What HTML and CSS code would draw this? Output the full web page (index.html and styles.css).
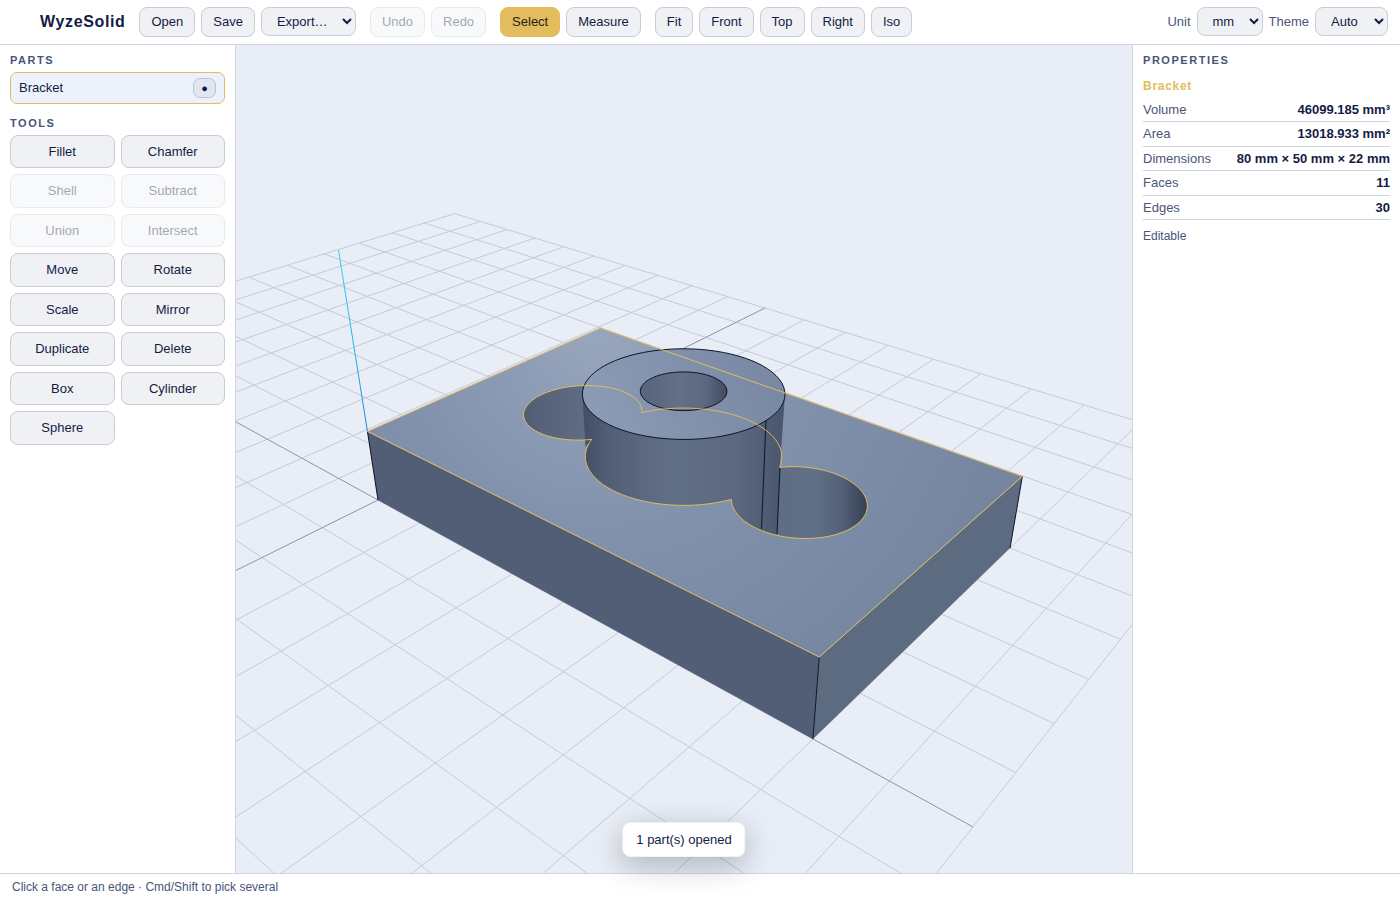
FILE: index.html
```html
<!DOCTYPE html>
<html lang="en">
<head>
<meta charset="utf-8">
<title>WyzeSolid</title>
<link rel="stylesheet" href="styles.css">
</head>
<body class="app">
<header class="topbar">
  <h1 class="brand">WyzeSolid</h1>
  <div class="group">
    <button class="btn" type="button">Open</button>
    <button class="btn" type="button">Save</button>
    <select class="select" aria-label="Export"><option>Export…</option></select>
  </div>
  <div class="group">
    <button class="btn" type="button" disabled>Undo</button>
    <button class="btn" type="button" disabled>Redo</button>
  </div>
  <div class="group">
    <button class="btn btn-active" type="button">Select</button>
    <button class="btn" type="button">Measure</button>
  </div>
  <div class="group">
    <button class="btn" type="button">Fit</button>
    <button class="btn" type="button">Front</button>
    <button class="btn" type="button">Top</button>
    <button class="btn" type="button">Right</button>
    <button class="btn" type="button">Iso</button>
  </div>
  <div class="group settings">
    <label for="unit">Unit</label>
    <select class="select" id="unit"><option>mm</option></select>
    <label for="theme">Theme</label>
    <select class="select select-theme" id="theme"><option>Auto</option></select>
  </div>
</header>

<main class="workspace">
  <aside class="panel panel-left">
    <h2 class="heading">Parts</h2>
    <div class="part">
      <span>Bracket</span>
      <button class="visibility" type="button" aria-label="Toggle visibility">●</button>
    </div>
    <h2 class="heading">Tools</h2>
    <div class="tools">
      <button class="btn tool" type="button">Fillet</button>
      <button class="btn tool" type="button">Chamfer</button>
      <button class="btn tool" type="button" disabled>Shell</button>
      <button class="btn tool" type="button" disabled>Subtract</button>
      <button class="btn tool" type="button" disabled>Union</button>
      <button class="btn tool" type="button" disabled>Intersect</button>
      <button class="btn tool" type="button">Move</button>
      <button class="btn tool" type="button">Rotate</button>
      <button class="btn tool" type="button">Scale</button>
      <button class="btn tool" type="button">Mirror</button>
      <button class="btn tool" type="button">Duplicate</button>
      <button class="btn tool" type="button">Delete</button>
      <button class="btn tool" type="button">Box</button>
      <button class="btn tool" type="button">Cylinder</button>
      <button class="btn tool" type="button">Sphere</button>
    </div>
  </aside>

  <section class="viewport" aria-label="3D view">
    <svg class="scene" viewBox="236 45 896 828" preserveAspectRatio="xMidYMid slice" aria-hidden="true">
      <defs>
        <radialGradient id="topShade" gradientUnits="userSpaceOnUse" cx="600" cy="330" r="430">
          <stop offset="0" stop-color="#98a6bd"/><stop offset=".45" stop-color="#8292ad"/><stop offset="1" stop-color="#7585a0"/>
        </radialGradient>
        <linearGradient id="bossShade" gradientUnits="userSpaceOnUse" x1="583" y1="0" x2="786" y2="0">
          <stop offset="0" stop-color="#434e63"/><stop offset=".12" stop-color="#525e75"/><stop offset=".45" stop-color="#627087"/><stop offset=".75" stop-color="#5b687f"/><stop offset="1" stop-color="#48556b"/>
        </linearGradient>
        <linearGradient id="bossTop" gradientUnits="userSpaceOnUse" x1="600" y1="430" x2="770" y2="350">
          <stop offset="0" stop-color="#8b9bb6"/><stop offset="1" stop-color="#7888a3"/>
        </linearGradient>
        <linearGradient id="leftPocket" gradientUnits="userSpaceOnUse" x1="523" y1="0" x2="600" y2="0">
          <stop offset="0" stop-color="#515d74"/><stop offset="1" stop-color="#637188"/>
        </linearGradient>
        <linearGradient id="rightPocket" gradientUnits="userSpaceOnUse" x1="732" y1="0" x2="868" y2="0">
          <stop offset="0" stop-color="#5b687f"/><stop offset=".6" stop-color="#617088"/><stop offset=".8" stop-color="#546178"/><stop offset="1" stop-color="#353f51"/>
        </linearGradient>
        <linearGradient id="hole" gradientUnits="userSpaceOnUse" x1="640" y1="0" x2="728" y2="0">
          <stop offset="0" stop-color="#56637a"/><stop offset=".45" stop-color="#637188"/><stop offset=".75" stop-color="#5b687f"/><stop offset="1" stop-color="#3f4a5f"/>
        </linearGradient>
        <linearGradient id="zAxis" gradientUnits="userSpaceOnUse" x1="339" y1="250" x2="378" y2="500">
          <stop offset="0" stop-color="#2bd8ec"/><stop offset=".35" stop-color="#2bb4f0"/><stop offset=".72" stop-color="#2380e6"/><stop offset="1" stop-color="#1a50c8"/>
        </linearGradient>
      </defs>
    </svg>
    <div class="toast" role="status">1 part(s) opened</div>
  </section>

  <aside class="panel panel-right">
    <h2 class="heading">Properties</h2>
    <h3 class="part-name">Bracket</h3>
    <dl class="props">
      <div class="prop"><dt>Volume</dt><dd>46099.185 mm³</dd></div>
      <div class="prop"><dt>Area</dt><dd>13018.933 mm²</dd></div>
      <div class="prop"><dt>Dimensions</dt><dd>80 mm × 50 mm × 22 mm</dd></div>
      <div class="prop"><dt>Faces</dt><dd>11</dd></div>
      <div class="prop"><dt>Edges</dt><dd>30</dd></div>
    </dl>
    <p class="note">Editable</p>
  </aside>
</main>

<footer class="statusbar">Click a face or an edge · Cmd/Shift to pick several</footer>
<script src="scene.js"></script>
</body>
</html>
```

FILE: styles.css
```css
* { box-sizing: border-box; }

.app {
  margin: 0;
  height: 100vh;
  display: flex;
  flex-direction: column;
  overflow: hidden;
  background: #fff;
  color: #141c44;
  font: 13px/1.5 "Liberation Sans", Arial, sans-serif;
}

.topbar {
  display: flex;
  align-items: center;
  gap: 14px;
  height: 45px;
  padding: 0 12px 0 40px;
  border-bottom: 1px solid #d0d4de;
}

.brand {
  margin: 0;
  font-size: 16px;
  line-height: 24px;
  letter-spacing: 0.04em;
}

.group {
  display: flex;
  align-items: flex-start;
  gap: 6px;
  min-height: 30px;
}

.settings {
  margin-left: auto;
  color: #4a5578;
  line-height: 29px;
}

.btn {
  min-height: 30px;
  padding: 4px 11px;
  border: 1px solid #c9ccd3;
  border-radius: 8px;
  background: #f0f1f4;
  color: #141c44;
  font: inherit;
}

.btn:disabled { opacity: 0.4; }

.btn-active {
  border-color: #e2bc5d;
  background: #e2bc5d;
  color: #231f1a;
}

.select {
  height: 29px;
  padding: 0 11px;
  border: 1px solid #c9ccd3;
  border-radius: 8px;
  background: #f0f1f4;
  color: #141c44;
  font: inherit;
}

.select-theme { min-width: 73px; }

.workspace {
  flex: 1;
  min-height: 0;
  display: grid;
  grid-template-columns: 236px minmax(0, 1fr) 268px;
}

.panel {
  padding: 7px 10px;
  overflow: auto;
}

.panel-left { border-right: 1px solid #d0d4de; }
.panel-right { border-left: 1px solid #d0d4de; }

.heading {
  margin: 0 0 4px;
  color: #4a5578;
  font-size: 11px;
  line-height: 16px;
  letter-spacing: 0.14em;
  text-transform: uppercase;
}

.part {
  display: flex;
  align-items: center;
  justify-content: space-between;
  margin-bottom: 11px;
  padding: 5px 8px;
  border: 1px solid #e2bc5d;
  border-radius: 7px;
  background: #edf1fb;
}

.visibility {
  height: 20px;
  margin: -1px 0;
  padding: 0 7px;
  border: 1px solid #bcc5d2;
  border-radius: 7px;
  background: #e1e6f0;
  color: #141c44;
  font: 11px/16px "Liberation Sans", Arial, sans-serif;
}

.tools {
  display: grid;
  grid-template-columns: 1fr 1fr;
  gap: 6px;
}

.tool { padding: 6px 4px; }

.viewport {
  position: relative;
  background: #e8edf6;
}

.scene {
  display: block;
  width: 100%;
  height: 100%;
}

.grid-line { stroke: #c5c9df; fill: none; }
.axis-line { stroke: #8c94b4; fill: none; }
.z-line { stroke: url(#zAxis); }
.edge { stroke: #0d1428; fill: none; }
.outline { stroke: #e2bc5d; fill: none; stroke-linejoin: round; }
.face-front { fill: #525e76; }
.face-side { fill: #5c6b80; }
.face-top { fill: url(#topShade); }
.pocket-left { fill: url(#leftPocket); }
.pocket-right { fill: url(#rightPocket); }
.boss-side { fill: url(#bossShade); }
.boss-top { fill: url(#bossTop); }
.boss-hole { fill: url(#hole); }

.toast {
  position: absolute;
  z-index: 1;
  left: 50%;
  bottom: 16px;
  transform: translateX(-50%);
  padding: 7px 13px;
  border: 1px solid #f2f3f6;
  border-radius: 8px;
  background: #fff;
  box-shadow: 0 8px 30px rgba(0, 0, 0, 0.25);
  white-space: nowrap;
}

.part-name {
  margin: 10px 0 3px;
  color: #e2bc5d;
  font-size: 12px;
  line-height: 1.375;
  letter-spacing: 0.06em;
}

.props { margin: 0; }

.prop {
  display: flex;
  justify-content: space-between;
  padding: 2px 0;
  border-bottom: 1px solid #d0d4de;
}

.prop dt { color: #4a5578; }
.prop dd { margin: 0; font-weight: bold; }

.note {
  margin: 8px 0 0;
  color: #4a5578;
  font-size: 12px;
  line-height: 16px;
}

.statusbar {
  height: 27px;
  padding: 4px 12px;
  border-top: 1px solid #d0d4de;
  color: #4a5578;
  font-size: 12px;
}
```

FILE: scene.js
```js
const svg = document.querySelector(".scene");

// Perspective projection from model millimetres to scene units.
function project(x, y, z) {
  const w = 1 - 0.003203 * x + 0.003829 * y - 0.002808 * z;
  return [
    (2.833 * x + 6.799 * y - 1.91 * z + 378) / w,
    (0.6204 * x - 0.7407 * y - 6.93 * z + 500) / w
  ];
}

function draw(points, className, closed) {
  const path = document.createElementNS("http://www.w3.org/2000/svg", "path");
  const d = "M" + points.map(p => p[0].toFixed(2) + " " + p[1].toFixed(2)).join("L");
  path.setAttribute("d", d + (closed ? "Z" : ""));
  path.setAttribute("class", className);
  svg.appendChild(path);
}

function arc(cx, cy, r, z, from, to) {
  const points = [];
  for (let i = 0; i <= 72; i++) {
    const t = from + (to - from) * i / 72;
    points.push(project(cx + r * Math.cos(t), cy + r * Math.sin(t), z));
  }
  return points;
}

const TAU = Math.PI * 2;
const TOP = 12;
const BOSS = 22;

// Ground grid, 10 mm cells
for (let i = -100; i <= 100; i += 10) {
  if (i === 0) continue;
  draw([project(i, -100, 0), project(i, 100, 0)], "grid-line");
  draw([project(-100, i, 0), project(100, i, 0)], "grid-line");
}
draw([project(0, -100, 0), project(0, 100, 0)], "axis-line");
draw([project(-100, 0, 0), project(100, 0, 0)], "axis-line");

// Plate
const a = project(0, 0, TOP), b = project(80, 0, TOP);
const c = project(80, 50, TOP), d = project(0, 50, TOP);
const a0 = project(0, 0, 0), b0 = project(80, 0, 0), c0 = project(80, 50, 0);
draw([[338.5, 250], a], "z-line");
draw([a, b, b0, a0], "face-front", true);
draw([b, c, c0, b0], "face-side", true);
draw([a, b, c, d], "face-top", true);

// Pocket: a 14 mm circle joined by two 9 mm circles
const big = Math.atan2(5.5, 12.875);
const small = Math.atan2(5.5, 7.125);
draw(arc(20, 25, 9, TOP, 0, TAU), "pocket-left", true);
draw(arc(60, 25, 9, TOP, 0, TAU), "pocket-right", true);

// Boss side, bounded by its silhouette and the pocket rim
const rim = arc(40, 25, 14, BOSS, 0, TAU);
const left = rim.reduce((m, p) => p[0] < m[0] ? p : m);
const right = rim.reduce((m, p) => p[0] > m[0] ? p : m);
const lowLeft = arc(40, 25, 14, TOP, Math.PI + big, TAU - big);
const rightRim = arc(60, 25, 9, TOP, Math.PI + small, TAU - 1.12)
  .filter(p => p[0] < 777);
draw([left, [585.5, 447], ...lowLeft, ...rightRim, [777, 534], [780, 467], right], "boss-side", true);
draw(rim, "boss-top", true);
draw(arc(40, 25, 6, BOSS, 0, TAU), "boss-hole", true);
draw(rim, "edge", true);
draw(arc(40, 25, 6, BOSS, 0, TAU), "edge", true);
draw([[766, 420], [761.5, 529]], "edge");
draw([[780, 467], [777, 534]], "edge");
draw([a, a0], "edge");
draw([b, b0], "edge");
draw([c, c0], "edge");

// Selected face outline
draw([a, b, c, d], "outline", true);
draw([
  ...arc(20, 25, 9, TOP, small, TAU - small),
  ...arc(40, 25, 14, TOP, Math.PI + big, TAU - big),
  ...arc(60, 25, 9, TOP, Math.PI + small, Math.PI * 3 - small),
  ...arc(40, 25, 14, TOP, big, Math.PI - big)
], "outline", true);
```
